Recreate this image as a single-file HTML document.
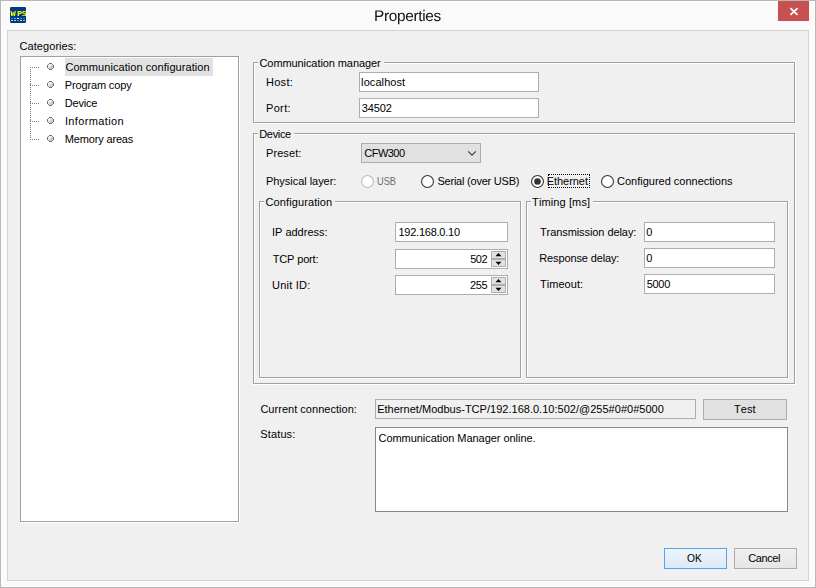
<!DOCTYPE html><html><head><meta charset="utf-8"><title>Properties</title><style>
*{box-sizing:border-box;margin:0;padding:0}
html,body{width:816px;height:588px;overflow:hidden;background:#fafafa}
body{position:relative;font-family:"Liberation Sans",sans-serif;font-size:11px;color:#000}
div{position:absolute}
.t{white-space:nowrap;line-height:13px;height:13px;font-size:11px;font-kerning:none}
.win{left:0;top:0;width:816px;height:588px;border:1px solid #b7b7b7;background:#fafafa}
.winhl{left:1px;top:1px;width:814px;height:586px;border:1px solid #fff}
.client{left:7px;top:30px;width:802px;height:551px;border:1px solid #d3d3d3;background:#f0f0f0}
.title{left:0;width:816px;text-align:center;font-size:15.4px;line-height:20px;top:7px;color:#111;letter-spacing:-0.33px;padding-right:1px;font-kerning:none;text-rendering:geometricPrecision}
.close{left:778px;top:1px;width:31px;height:20px;background:#c75050}
.eb{background:transparent}
.eg{border:1px solid #a0a0a0}
.ew{border:1px solid #fff}
.gtb{background:#f0f0f0}
.tf{background:#fff;border:1px solid #abadb3}
.ro{background:#f0f0f0;border:1px solid #abadb3}
.btn{background:#e1e1e1;border:1px solid #adadad}
.btnd{background:linear-gradient(#eef5fc,#dce9f7);border:1px solid #56a3ee}
.btng{background:linear-gradient(#f0f0f0,#e5e5e5);border:1px solid #acacac}
.dis{color:#6d6d6d}
.radio{width:13px;height:13px;border-radius:50%;border:1px solid #333;background:#fff}
.radio.d{border-color:#bcbcbc}
.dot{left:2px;top:2px;width:7px;height:7px;border-radius:50%;background:#333}
.sel{background:#e2e2e2}
</style></head><body>
<div class="win"></div><div class="winhl"></div>
<svg style="position:absolute;left:9px;top:6px;will-change:transform" width="18" height="18" viewBox="0 0 18 18">
<rect x="0.5" y="0.5" width="17" height="17" rx="2" fill="#fff"/>
<rect x="1" y="1" width="16" height="16" rx="1.3" fill="#003c84"/>
<clipPath id="icl"><rect x="1" y="1" width="16" height="16"/></clipPath>
<g clip-path="url(#icl)"><text transform="scale(1.28 1)" y="10.1" font-family="DejaVu Sans Mono, Liberation Mono, monospace" font-weight="bold" font-size="6.8" fill="#ffff00" x="1.25 6.25 10.05">WPS</text></g>
<g>
<rect x="2" y="12" width="2" height="1" fill="#1e8fd0"/><rect x="5" y="12" width="2" height="1" fill="#4ab0e0"/><rect x="8" y="12" width="2" height="1" fill="#ffffff"/><rect x="11" y="12" width="2" height="1" fill="#4ab0e0"/><rect x="14" y="12" width="2" height="1" fill="#3a7fb0"/>
<rect x="2" y="14" width="2" height="1" fill="#b8e2f2"/><rect x="5" y="14" width="2" height="1" fill="#a4d8ee"/><rect x="8" y="14" width="2" height="1" fill="#1e86c8"/><rect x="11" y="14" width="2" height="1" fill="#b8e2f2"/><rect x="14" y="14" width="2" height="1" fill="#86bde4"/>
</g></svg>
<div class="title">Properties</div>
<div class="close"><svg width="31" height="20" viewBox="0 0 31 20" style="position:absolute;left:0;top:0"><path d="M12.4 7.2 L19.6 13.8 M19.6 7.2 L12.4 13.8" stroke="#fff" stroke-width="1.8" fill="none"/></svg></div>
<div class="client"></div>
<div class="t " style="left:19.59px;top:40px;letter-spacing:0.056px;">Categories:</div>
<div class="eb ew" style="left:21px;top:57px;width:219px;height:466px;"></div>
<div class="" style="left:20px;top:522px;width:1px;height:1px;background:#fff"></div>
<div class="" style="left:239px;top:56px;width:1px;height:1px;background:#fff"></div>
<div class="eb eg" style="left:20px;top:56px;width:219px;height:466px;background:#fff"></div>
<svg style="position:absolute;left:30px;top:67px" width="10" height="74" viewBox="0 0 10 74" shape-rendering="crispEdges">
<g fill="#808080"><rect x="0" y="0" width="1" height="1"/><rect x="0" y="2" width="1" height="1"/><rect x="0" y="4" width="1" height="1"/><rect x="0" y="6" width="1" height="1"/><rect x="0" y="8" width="1" height="1"/><rect x="0" y="10" width="1" height="1"/><rect x="0" y="12" width="1" height="1"/><rect x="0" y="14" width="1" height="1"/><rect x="0" y="16" width="1" height="1"/><rect x="0" y="18" width="1" height="1"/><rect x="0" y="20" width="1" height="1"/><rect x="0" y="22" width="1" height="1"/><rect x="0" y="24" width="1" height="1"/><rect x="0" y="26" width="1" height="1"/><rect x="0" y="28" width="1" height="1"/><rect x="0" y="30" width="1" height="1"/><rect x="0" y="32" width="1" height="1"/><rect x="0" y="34" width="1" height="1"/><rect x="0" y="36" width="1" height="1"/><rect x="0" y="38" width="1" height="1"/><rect x="0" y="40" width="1" height="1"/><rect x="0" y="42" width="1" height="1"/><rect x="0" y="44" width="1" height="1"/><rect x="0" y="46" width="1" height="1"/><rect x="0" y="48" width="1" height="1"/><rect x="0" y="50" width="1" height="1"/><rect x="0" y="52" width="1" height="1"/><rect x="0" y="54" width="1" height="1"/><rect x="0" y="56" width="1" height="1"/><rect x="0" y="58" width="1" height="1"/><rect x="0" y="60" width="1" height="1"/><rect x="0" y="62" width="1" height="1"/><rect x="0" y="64" width="1" height="1"/><rect x="0" y="66" width="1" height="1"/><rect x="0" y="68" width="1" height="1"/><rect x="0" y="70" width="1" height="1"/><rect x="0" y="72" width="1" height="1"/><rect x="2" y="0" width="1" height="1"/><rect x="4" y="0" width="1" height="1"/><rect x="6" y="0" width="1" height="1"/><rect x="8" y="0" width="1" height="1"/><rect x="2" y="18" width="1" height="1"/><rect x="4" y="18" width="1" height="1"/><rect x="6" y="18" width="1" height="1"/><rect x="8" y="18" width="1" height="1"/><rect x="2" y="36" width="1" height="1"/><rect x="4" y="36" width="1" height="1"/><rect x="6" y="36" width="1" height="1"/><rect x="8" y="36" width="1" height="1"/><rect x="2" y="54" width="1" height="1"/><rect x="4" y="54" width="1" height="1"/><rect x="6" y="54" width="1" height="1"/><rect x="8" y="54" width="1" height="1"/><rect x="2" y="72" width="1" height="1"/><rect x="4" y="72" width="1" height="1"/><rect x="6" y="72" width="1" height="1"/><rect x="8" y="72" width="1" height="1"/><rect x="0" y="17" width="1" height="1"/><rect x="0" y="35" width="1" height="1"/><rect x="0" y="53" width="1" height="1"/></g></svg>
<div class="sel" style="left:65px;top:58px;width:148px;height:18px;"></div>
<svg style="position:absolute;left:47px;top:63px" width="7" height="7" viewBox="0 0 7 7" shape-rendering="crispEdges"><defs><linearGradient id="tg0" x1="0" y1="0" x2="1" y2="1"><stop offset="0.15" stop-color="#ffffff"/><stop offset="0.55" stop-color="#d4d6d6"/><stop offset="0.9" stop-color="#bcbebe"/></linearGradient></defs><path d="M2 0h3v1h1v1h1v3h-1v1h-1v1h-3v-1h-1v-1h-1v-3h1v-1h1z" fill="#6e7071"/><path d="M1 1h1v1h-1zM5 1h1v1h-1zM1 5h1v1h-1zM5 5h1v1h-1z" fill="#8c8e8e"/><path d="M2 1h3v1h1v3h-1v1h-3v-1h-1v-3h1z" fill="url(#tg0)"/></svg>
<div class="t " style="left:65.39px;top:61px;letter-spacing:0.068px;">Communication configuration</div>
<svg style="position:absolute;left:47px;top:81px" width="7" height="7" viewBox="0 0 7 7" shape-rendering="crispEdges"><defs><linearGradient id="tg1" x1="0" y1="0" x2="1" y2="1"><stop offset="0.15" stop-color="#ffffff"/><stop offset="0.55" stop-color="#d4d6d6"/><stop offset="0.9" stop-color="#bcbebe"/></linearGradient></defs><path d="M2 0h3v1h1v1h1v3h-1v1h-1v1h-3v-1h-1v-1h-1v-3h1v-1h1z" fill="#6e7071"/><path d="M1 1h1v1h-1zM5 1h1v1h-1zM1 5h1v1h-1zM5 5h1v1h-1z" fill="#8c8e8e"/><path d="M2 1h3v1h1v3h-1v1h-3v-1h-1v-3h1z" fill="url(#tg1)"/></svg>
<div class="t " style="left:64.75px;top:79px;letter-spacing:-0.145px;">Program copy</div>
<svg style="position:absolute;left:47px;top:99px" width="7" height="7" viewBox="0 0 7 7" shape-rendering="crispEdges"><defs><linearGradient id="tg2" x1="0" y1="0" x2="1" y2="1"><stop offset="0.15" stop-color="#ffffff"/><stop offset="0.55" stop-color="#d4d6d6"/><stop offset="0.9" stop-color="#bcbebe"/></linearGradient></defs><path d="M2 0h3v1h1v1h1v3h-1v1h-1v1h-3v-1h-1v-1h-1v-3h1v-1h1z" fill="#6e7071"/><path d="M1 1h1v1h-1zM5 1h1v1h-1zM1 5h1v1h-1zM5 5h1v1h-1z" fill="#8c8e8e"/><path d="M2 1h3v1h1v3h-1v1h-3v-1h-1v-3h1z" fill="url(#tg2)"/></svg>
<div class="t " style="left:64.75px;top:97px;letter-spacing:-0.216px;">Device</div>
<svg style="position:absolute;left:47px;top:117px" width="7" height="7" viewBox="0 0 7 7" shape-rendering="crispEdges"><defs><linearGradient id="tg3" x1="0" y1="0" x2="1" y2="1"><stop offset="0.15" stop-color="#ffffff"/><stop offset="0.55" stop-color="#d4d6d6"/><stop offset="0.9" stop-color="#bcbebe"/></linearGradient></defs><path d="M2 0h3v1h1v1h1v3h-1v1h-1v1h-3v-1h-1v-1h-1v-3h1v-1h1z" fill="#6e7071"/><path d="M1 1h1v1h-1zM5 1h1v1h-1zM1 5h1v1h-1zM5 5h1v1h-1z" fill="#8c8e8e"/><path d="M2 1h3v1h1v3h-1v1h-3v-1h-1v-3h1z" fill="url(#tg3)"/></svg>
<div class="t " style="left:64.93px;top:115px;letter-spacing:0.365px;">Information</div>
<svg style="position:absolute;left:47px;top:135px" width="7" height="7" viewBox="0 0 7 7" shape-rendering="crispEdges"><defs><linearGradient id="tg4" x1="0" y1="0" x2="1" y2="1"><stop offset="0.15" stop-color="#ffffff"/><stop offset="0.55" stop-color="#d4d6d6"/><stop offset="0.9" stop-color="#bcbebe"/></linearGradient></defs><path d="M2 0h3v1h1v1h1v3h-1v1h-1v1h-3v-1h-1v-1h-1v-3h1v-1h1z" fill="#6e7071"/><path d="M1 1h1v1h-1zM5 1h1v1h-1zM1 5h1v1h-1zM5 5h1v1h-1z" fill="#8c8e8e"/><path d="M2 1h3v1h1v3h-1v1h-3v-1h-1v-3h1z" fill="url(#tg4)"/></svg>
<div class="t " style="left:64.75px;top:133px;letter-spacing:-0.159px;">Memory areas</div>
<div class="eb ew" style="left:254px;top:63px;width:542px;height:61px;"></div>
<div class="" style="left:253px;top:123px;width:1px;height:1px;background:#fff"></div>
<div class="" style="left:795px;top:62px;width:1px;height:1px;background:#fff"></div>
<div class="eb eg" style="left:253px;top:62px;width:542px;height:61px;"></div>
<div class="gtb" style="left:258px;top:59px;width:126px;height:6px"></div>
<div class="t " style="left:259.49px;top:57px;letter-spacing:-0.085px;">Communication manager</div>
<div class="t " style="left:265.95px;top:76px;letter-spacing:0.296px;">Host:</div>
<div class="t " style="left:265.95px;top:102px;letter-spacing:0.357px;">Port:</div>
<div class="tf" style="left:359px;top:72px;width:180px;height:20px;"></div>
<div class="t " style="left:361.11px;top:76px;letter-spacing:0.082px;">localhost</div>
<div class="tf" style="left:359px;top:98px;width:180px;height:20px;"></div>
<div class="t " style="left:361.73px;top:102px;letter-spacing:-0.117px;">34502</div>
<div class="eb ew" style="left:254px;top:134px;width:542px;height:251px;"></div>
<div class="" style="left:253px;top:384px;width:1px;height:1px;background:#fff"></div>
<div class="" style="left:795px;top:133px;width:1px;height:1px;background:#fff"></div>
<div class="eb eg" style="left:253px;top:133px;width:542px;height:251px;"></div>
<div class="gtb" style="left:258px;top:130px;width:36px;height:6px"></div>
<div class="t " style="left:259.25px;top:128px;letter-spacing:-0.336px;">Device</div>
<div class="t " style="left:265.95px;top:147px;letter-spacing:0.102px;">Preset:</div>
<div class="btn" style="left:361px;top:143px;width:120px;height:20px;"></div>
<div class="t " style="left:364.29px;top:147px;letter-spacing:-0.532px;">CFW300</div>
<svg style="position:absolute;left:466px;top:149.4px" width="12" height="9" viewBox="0 0 12 9"><path d="M2.2 2.3 L6 6.2 L9.8 2.3" stroke="#404040" stroke-width="1.2" fill="none"/></svg>
<div class="t " style="left:265.95px;top:175px;letter-spacing:-0.033px;">Physical layer:</div>
<svg style="position:absolute;left:361px;top:175px" width="13" height="13" viewBox="0 0 13 13"><circle cx="6.5" cy="6.5" r="5.95" fill="#fff" stroke="#bcbcbc" stroke-width="1.1"/></svg>
<div class="t dis" style="left:376.94px;top:175px;transform:scaleX(0.8377);transform-origin:0 0;">USB</div>
<svg style="position:absolute;left:421px;top:175px" width="13" height="13" viewBox="0 0 13 13"><circle cx="6.5" cy="6.5" r="5.95" fill="#fff" stroke="#333" stroke-width="1.1"/></svg>
<div class="t " style="left:437.45px;top:175px;letter-spacing:-0.222px;">Serial (over USB)</div>
<svg style="position:absolute;left:531px;top:175px" width="13" height="13" viewBox="0 0 13 13"><circle cx="6.5" cy="6.5" r="5.95" fill="#fff" stroke="#333" stroke-width="1.1"/><circle cx="6.5" cy="6.5" r="3.3" fill="#333"/></svg>
<div class="t " style="left:546.75px;top:175px;letter-spacing:-0.050px;">Ethernet</div>
<svg style="position:absolute;left:601px;top:175px" width="13" height="13" viewBox="0 0 13 13"><circle cx="6.5" cy="6.5" r="5.95" fill="#fff" stroke="#333" stroke-width="1.1"/></svg>
<div class="t " style="left:617.09px;top:175px;letter-spacing:-0.008px;">Configured connections</div>
<div class="" style="left:548px;top:174px;width:42px;height:14px;border:1px dotted #000"></div>
<div class="eb ew" style="left:260px;top:202px;width:262px;height:177px;"></div>
<div class="" style="left:259px;top:378px;width:1px;height:1px;background:#fff"></div>
<div class="" style="left:521px;top:201px;width:1px;height:1px;background:#fff"></div>
<div class="eb eg" style="left:259px;top:201px;width:262px;height:177px;"></div>
<div class="gtb" style="left:264px;top:198px;width:71px;height:6px"></div>
<div class="t " style="left:265.49px;top:196px;letter-spacing:0.108px;">Configuration</div>
<div class="t " style="left:271.93px;top:226px;letter-spacing:0.003px;">IP address:</div>
<div class="t " style="left:272.70px;top:253px;letter-spacing:-0.146px;">TCP port:</div>
<div class="t " style="left:272.10px;top:279px;letter-spacing:0.218px;">Unit ID:</div>
<div class="tf" style="left:395px;top:222px;width:113px;height:20px;"></div>
<div class="t " style="left:398.51px;top:226px;letter-spacing:-0.246px;">192.168.0.10</div>
<div class="tf" style="left:395px;top:249px;width:113px;height:20px;"></div>
<div class="t " style="left:470.21px;top:253px;letter-spacing:-0.455px;">502</div>
<div class="btn" style="left:491px;top:251px;width:15px;height:8px;"></div>
<div class="btn" style="left:491px;top:259px;width:15px;height:8px;"></div>
<svg style="position:absolute;left:491px;top:251px" width="15" height="16" viewBox="0 0 15 16"><path d="M4.5 5.2 L7.5 1.9 L10.5 5.2 Z M4.5 10.8 L7.5 14.1 L10.5 10.8 Z" fill="#000"/></svg>
<div class="tf" style="left:395px;top:275px;width:113px;height:20px;"></div>
<div class="t " style="left:470.10px;top:279px;letter-spacing:-0.444px;">255</div>
<div class="btn" style="left:491px;top:277px;width:15px;height:8px;"></div>
<div class="btn" style="left:491px;top:285px;width:15px;height:8px;"></div>
<svg style="position:absolute;left:491px;top:277px" width="15" height="16" viewBox="0 0 15 16"><path d="M4.5 5.2 L7.5 1.9 L10.5 5.2 Z M4.5 10.8 L7.5 14.1 L10.5 10.8 Z" fill="#000"/></svg>
<div class="eb ew" style="left:527px;top:202px;width:262px;height:177px;"></div>
<div class="" style="left:526px;top:378px;width:1px;height:1px;background:#fff"></div>
<div class="" style="left:788px;top:201px;width:1px;height:1px;background:#fff"></div>
<div class="eb eg" style="left:526px;top:201px;width:262px;height:177px;"></div>
<div class="gtb" style="left:531px;top:198px;width:62px;height:6px"></div>
<div class="t " style="left:532.10px;top:196px;letter-spacing:0.114px;">Timing [ms]</div>
<div class="t " style="left:539.90px;top:226px;letter-spacing:-0.073px;">Transmission delay:</div>
<div class="t " style="left:539.25px;top:252px;letter-spacing:-0.127px;">Response delay:</div>
<div class="t " style="left:539.90px;top:278px;letter-spacing:0.059px;">Timeout:</div>
<div class="tf" style="left:644px;top:222px;width:131px;height:20px;"></div>
<div class="t " style="left:646.27px;top:226px;">0</div>
<div class="tf" style="left:644px;top:248px;width:131px;height:20px;"></div>
<div class="t " style="left:646.27px;top:252px;">0</div>
<div class="tf" style="left:644px;top:274px;width:131px;height:20px;"></div>
<div class="t " style="left:646.71px;top:278px;letter-spacing:-0.284px;">5000</div>
<div class="t " style="left:260.39px;top:403px;letter-spacing:0.029px;">Current connection:</div>
<div class="ro" style="left:375px;top:399px;width:321px;height:20px;"></div>
<div class="t " style="left:377.15px;top:403px;letter-spacing:0.019px;">Ethernet/Modbus-TCP/192.168.0.10:502/@255#0#0#5000</div>
<div class="btn" style="left:703px;top:399px;width:84px;height:21px;"></div>
<div class="t " style="left:734.10px;top:403px;letter-spacing:-0.005px;">Test</div>
<div class="t " style="left:260.35px;top:428px;letter-spacing:0.119px;">Status:</div>
<div class="tf" style="left:375px;top:427px;width:413px;height:85px;border-color:#828790"></div>
<div class="t " style="left:378.49px;top:432px;letter-spacing:-0.045px;">Communication Manager online.</div>
<div class="btnd" style="left:664px;top:548px;width:63px;height:21px;"></div>
<div class="t " style="left:687.06px;top:552px;transform:scaleX(0.9345);transform-origin:0 0;">OK</div>
<div class="btng" style="left:734px;top:548px;width:63px;height:21px;"></div>
<div class="t " style="left:748.29px;top:552px;letter-spacing:-0.419px;">Cancel</div>
</body></html>
